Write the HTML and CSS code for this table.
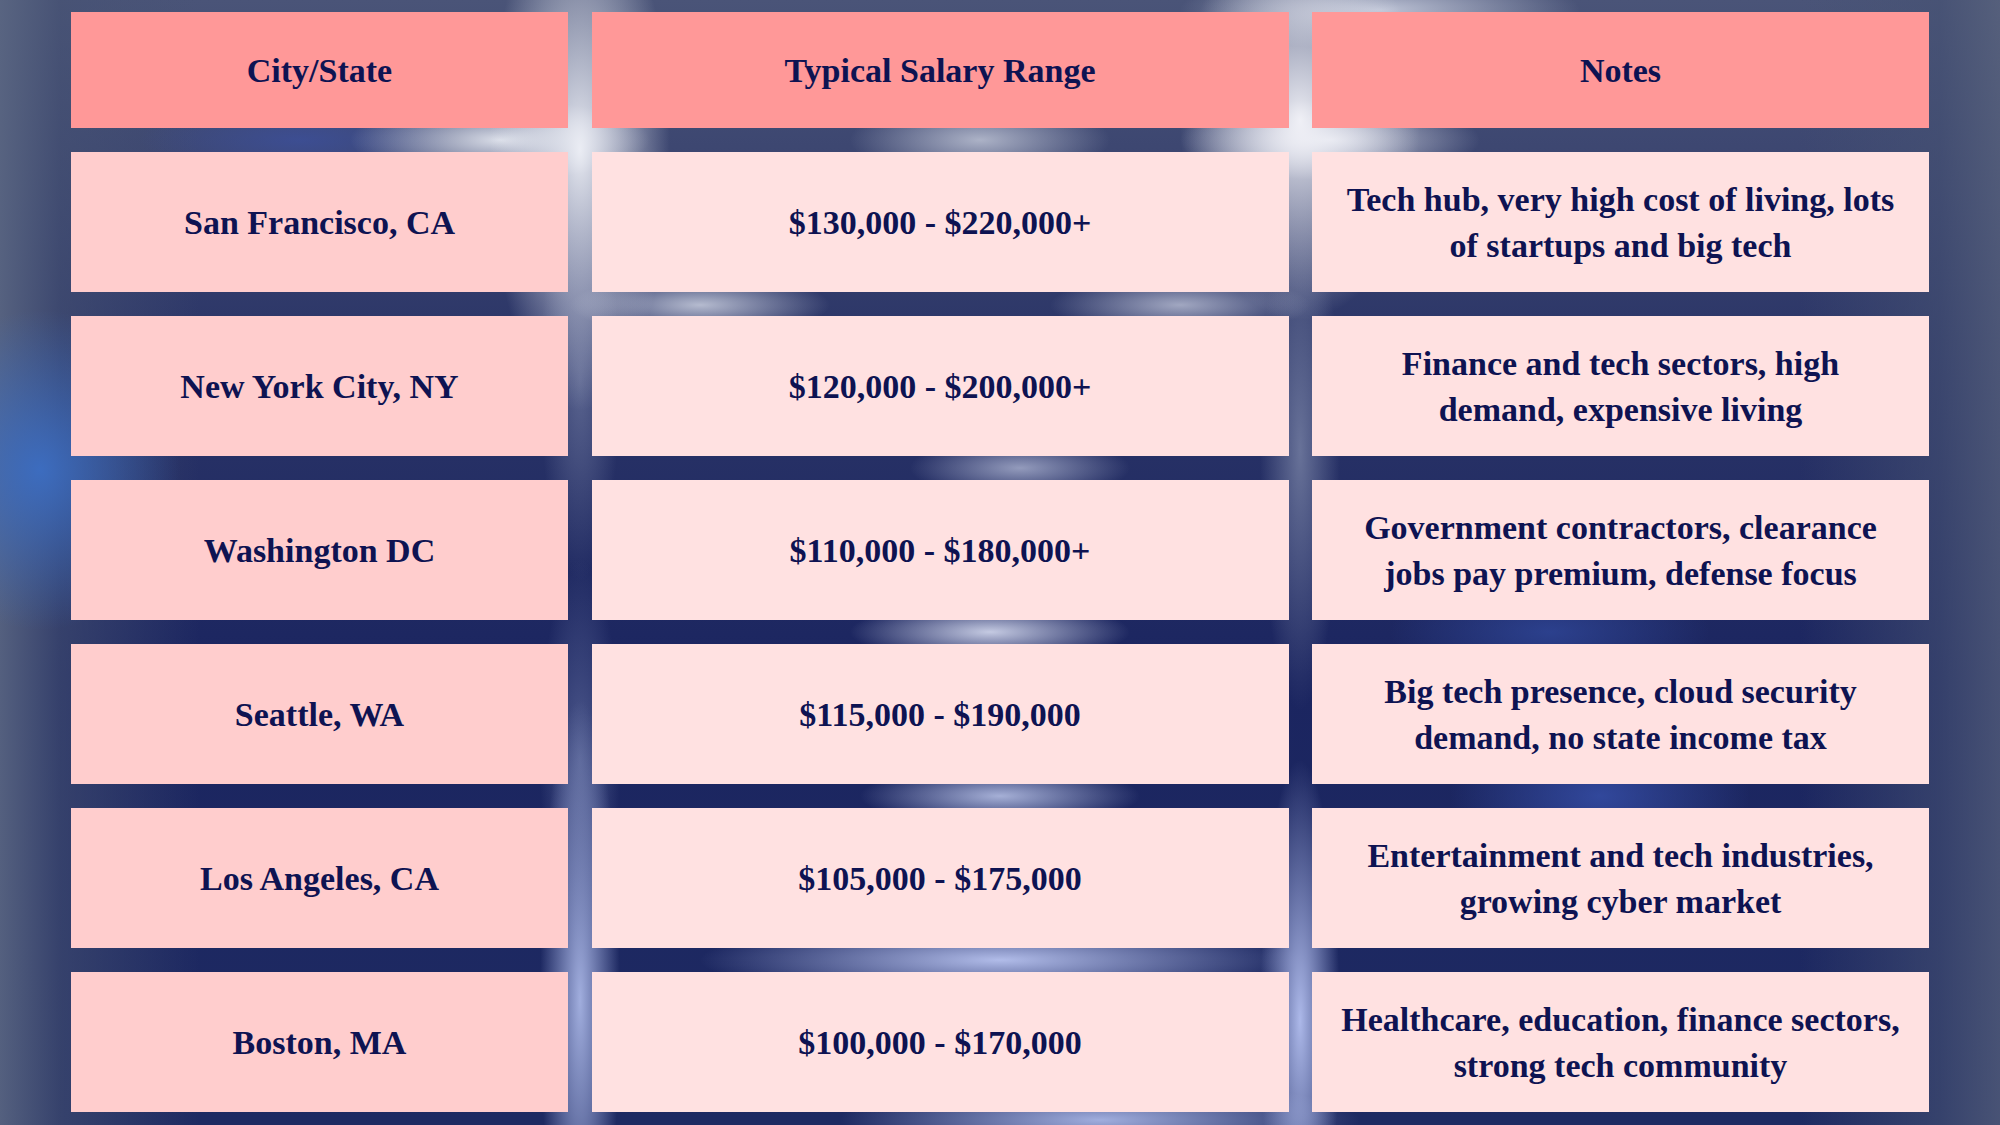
FILE: index.html
```html
<!DOCTYPE html>
<html lang="en">
<head>
<meta charset="utf-8">
<title>Salary by City</title>
<link rel="stylesheet" href="styles.css">
</head>
<body>
<div class="page">
  <div class="table">
    <div class="cell head">City/State</div>
    <div class="cell head">Typical Salary Range</div>
    <div class="cell head">Notes</div>

    <div class="cell city">San Francisco, CA</div>
    <div class="cell val">$130,000 - $220,000+</div>
    <div class="cell val">Tech hub, very high cost of living, lots<br>of startups and big tech</div>

    <div class="cell city">New York City, NY</div>
    <div class="cell val">$120,000 - $200,000+</div>
    <div class="cell val">Finance and tech sectors, high<br>demand, expensive living</div>

    <div class="cell city">Washington DC</div>
    <div class="cell val">$110,000 - $180,000+</div>
    <div class="cell val">Government contractors, clearance<br>jobs pay premium, defense focus</div>

    <div class="cell city">Seattle, WA</div>
    <div class="cell val">$115,000 - $190,000</div>
    <div class="cell val">Big tech presence, cloud security<br>demand, no state income tax</div>

    <div class="cell city">Los Angeles, CA</div>
    <div class="cell val">$105,000 - $175,000</div>
    <div class="cell val">Entertainment and tech industries,<br>growing cyber market</div>

    <div class="cell city">Boston, MA</div>
    <div class="cell val">$100,000 - $170,000</div>
    <div class="cell val">Healthcare, education, finance sectors,<br>strong tech community</div>
  </div>
</div>
</body>
</html>
```

FILE: styles.css
```css
html, body {
  margin: 0;
  padding: 0;
}

body {
  width: 2000px;
  height: 1125px;
  overflow: hidden;
  font-family: "Liberation Serif", "Times New Roman", serif;
}

.page {
  width: 2000px;
  height: 1125px;
  box-sizing: border-box;
  padding: 12px 71px 0 71px;
  background-color: #1f2a62;
  background-image:
    radial-gradient(ellipse 90px 260px at 580px 150px, rgba(240,242,248,0.95), rgba(240,242,248,0) 100%),
    radial-gradient(ellipse 120px 200px at 1300px 120px, rgba(245,245,250,0.95), rgba(245,245,250,0) 100%),
    radial-gradient(ellipse 150px 40px at 500px 140px, rgba(235,238,245,0.9), rgba(235,238,245,0) 100%),
    radial-gradient(ellipse 200px 40px at 1380px 10px, rgba(210,215,230,0.85), rgba(210,215,230,0) 100%),
    radial-gradient(ellipse 130px 40px at 980px 140px, rgba(200,205,220,0.8), rgba(200,205,220,0) 100%),
    radial-gradient(ellipse 150px 40px at 1330px 140px, rgba(225,228,238,0.9), rgba(225,228,238,0) 100%),
    radial-gradient(ellipse 130px 30px at 700px 305px, rgba(205,210,225,0.85), rgba(205,210,225,0) 100%),
    radial-gradient(ellipse 130px 30px at 1180px 305px, rgba(190,195,215,0.8), rgba(190,195,215,0) 100%),
    radial-gradient(ellipse 110px 30px at 1020px 468px, rgba(175,182,210,0.8), rgba(175,182,210,0) 100%),
    radial-gradient(ellipse 140px 30px at 990px 632px, rgba(215,220,240,0.9), rgba(215,220,240,0) 100%),
    radial-gradient(ellipse 140px 30px at 1000px 796px, rgba(190,200,235,0.85), rgba(190,200,235,0) 100%),
    radial-gradient(ellipse 40px 300px at 580px 1000px, rgba(175,188,235,0.9), rgba(175,188,235,0) 100%),
    radial-gradient(ellipse 40px 260px at 1300px 1020px, rgba(180,192,240,0.95), rgba(180,192,240,0) 100%),
    radial-gradient(ellipse 300px 40px at 1000px 960px, rgba(185,196,240,0.95), rgba(185,196,240,0) 100%),
    radial-gradient(ellipse 260px 40px at 1100px 1120px, rgba(175,188,235,0.9), rgba(175,188,235,0) 100%),
    radial-gradient(ellipse 40px 260px at 1300px 450px, rgba(120,130,165,0.8), rgba(120,130,165,0) 100%),
    radial-gradient(ellipse 40px 200px at 580px 380px, rgba(110,120,160,0.7), rgba(110,120,160,0) 100%),
    radial-gradient(ellipse 40px 200px at 580px 760px, rgba(100,112,160,0.7), rgba(100,112,160,0) 100%),
    radial-gradient(ellipse 140px 160px at 40px 470px, rgba(60,110,195,0.95), rgba(60,110,195,0) 100%),
    radial-gradient(ellipse 150px 80px at 1600px 796px, rgba(55,80,170,0.8), rgba(55,80,170,0) 100%),
    radial-gradient(ellipse 160px 60px at 1550px 632px, rgba(50,75,160,0.7), rgba(50,75,160,0) 100%),
    radial-gradient(ellipse 160px 40px at 300px 140px, rgba(60,80,160,0.7), rgba(60,80,160,0) 100%),
    linear-gradient(90deg, rgba(90,102,130,0.9) 0px, rgba(70,82,115,0.6) 60px, rgba(0,0,0,0) 200px, rgba(0,0,0,0) 1800px, rgba(70,82,115,0.6) 1940px, rgba(90,100,125,0.7) 2000px),
    linear-gradient(180deg, #4a5478 0%, #2c3668 30%, #1b2560 60%, #1e2a62 100%);
}

.table {
  display: grid;
  grid-template-columns: 497px 697px 617px;
  grid-template-rows: 116px repeat(6, 140px);
  column-gap: 23.5px;
  row-gap: 24px;
}

.cell {
  display: flex;
  align-items: center;
  justify-content: center;
  text-align: center;
  color: #0e1352;
  font-weight: 700;
  font-size: 34px;
  line-height: 46px;
  padding: 2px 10px 0 10px;
  white-space: nowrap;
}

.head {
  background: #ff9898;
}

.city {
  background: #ffcdcd;
}

.val {
  background: #ffe1e1;
}
```
